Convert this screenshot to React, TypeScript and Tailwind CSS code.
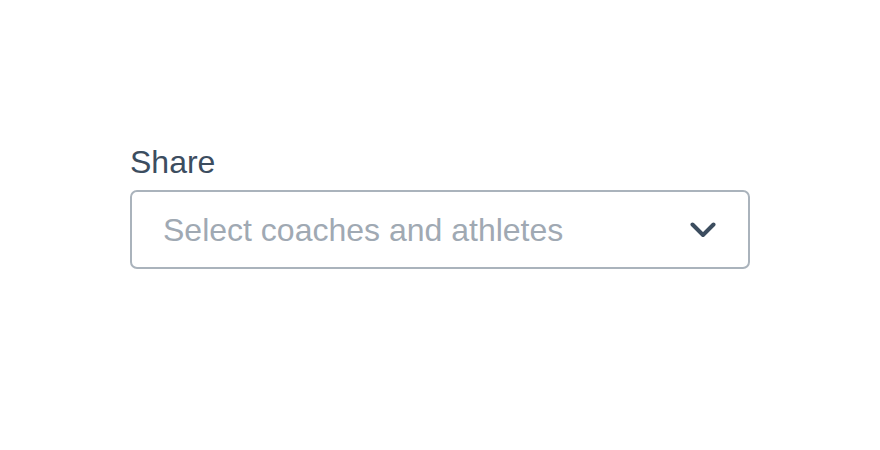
export default function App() {
  return (
    <div className="w-[880px] h-[450px] bg-white font-['Liberation_Sans',Arial,sans-serif]">
      <div className="pl-[130px] pt-[142px] w-[750px]">
        <label className="block text-[32px] leading-[40px] text-[#3c4d5f] mb-[8px]">Share</label>
        <button
          type="button"
          className="w-[620px] h-[79px] flex items-center justify-between border-2 border-[#aab3bc] rounded-[7px] pl-[31px] pr-[32px] bg-white"
        >
          <span className="text-[32px] leading-[40px] text-[#a0a9b3]">Select coaches and athletes</span>
          <svg width="26" height="16" viewBox="0 0 26 16" fill="none">
            <path d="M2.5 2.5 L13 13 L23.5 2.5" stroke="#3c4d5f" strokeWidth="4" strokeLinecap="round" strokeLinejoin="round" />
          </svg>
        </button>
      </div>
    </div>
  );
}
